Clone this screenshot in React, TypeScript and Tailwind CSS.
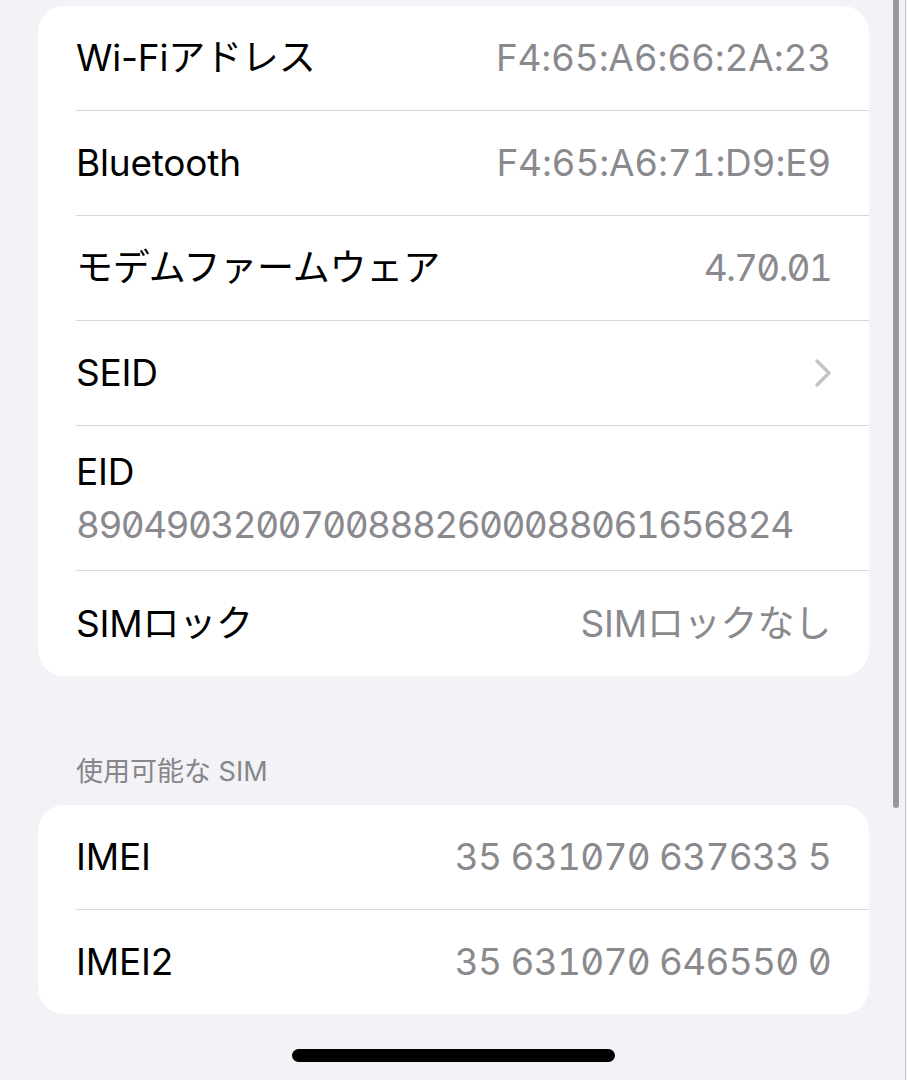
const font = { fontFamily: '"Inter", "Noto Sans CJK JP", sans-serif' };

type Row = { label: string; value?: string; chevron?: boolean; valueClass?: string };

const infoRows: Row[] = [
  { label: 'Wi-Fiアドレス', value: 'F4:65:A6:66:2A:23' },
  { label: 'Bluetooth', value: 'F4:65:A6:71:D9:E9' },
  { label: 'モデムファームウェア', value: '4.70.01', valueClass: 'tracking-[-1.8px]' },
  { label: 'SEID', chevron: true },
];

function Chevron() {
  return (
    <svg width="18" height="30" viewBox="0 0 18 30" fill="none" className="-mr-[1px]">
      <path d="M3 3 L15 15 L3 27" stroke="#c4c4c7" strokeWidth="3.4" strokeLinecap="round" strokeLinejoin="round" />
    </svg>
  );
}

function InfoRow({ row, last, h }: { row: Row; last?: boolean; h: string }) {
  return (
    <div className="pl-[38px]">
      <div className={`${h} flex items-center justify-between pr-[38px] ${last ? '' : 'border-b border-[#d8d8dc]'}`}>
        <span className="text-[37px] leading-[44px] text-black tracking-[-0.2px]">{row.label}</span>
        {row.chevron ? (
          <Chevron />
        ) : (
          <span className={`text-[37px] leading-[44px] text-[#8a8a8e] tabular-nums slashed-zero ${row.valueClass ?? 'tracking-[-0.2px]'}`}>
            {row.value}
          </span>
        )}
      </div>
    </div>
  );
}

export default function App() {
  return (
    <div className="relative w-[907px] h-[1080px] bg-[#f2f2f7] overflow-hidden" style={font}>
      <div className="px-[38px] pt-[6px]">
        <div className="bg-white rounded-[26px] overflow-hidden">
          {infoRows.map((r) => (
            <InfoRow key={r.label} row={r} h="h-[105px]" />
          ))}
          <div className="pl-[38px]">
            <div className="h-[145px] flex flex-col justify-center gap-[9px] pr-[38px] border-b border-[#d8d8dc]">
              <span className="text-[37px] leading-[44px] text-black tracking-[-0.2px]">EID</span>
              <span className="text-[37px] leading-[44px] text-[#8a8a8e] tabular-nums slashed-zero tracking-[-1.6px]">
                89049032007008882600088061656824
              </span>
            </div>
          </div>
          <InfoRow row={{ label: 'SIMロック', value: 'SIMロックなし' }} last h="h-[105px]" />
        </div>

        <div className="mt-[80px] mb-[17px] pl-[38px] text-[27px] leading-[32px] text-[#86868b]">使用可能な SIM</div>

        <div className="bg-white rounded-[26px] overflow-hidden">
          <InfoRow row={{ label: 'IMEI', value: '35 631070 637633 5', valueClass: 'tracking-[-0.75px]' }} h="h-[105px]" />
          <InfoRow row={{ label: 'IMEI2', value: '35 631070 646550 0', valueClass: 'tracking-[-0.75px]' }} last h="h-[104px]" />
        </div>
      </div>

      {/* scroll indicator */}
      <div className="absolute left-[893px] top-[-10px] w-[6px] h-[818px] rounded-full bg-[#98989c]" />
      <div className="absolute left-[905px] top-0 w-[1px] h-full bg-[#c4c4c8]" />

      {/* home indicator */}
      <div className="absolute left-[292px] top-[1049px] w-[323px] h-[13px] rounded-full bg-black" />
    </div>
  );
}
